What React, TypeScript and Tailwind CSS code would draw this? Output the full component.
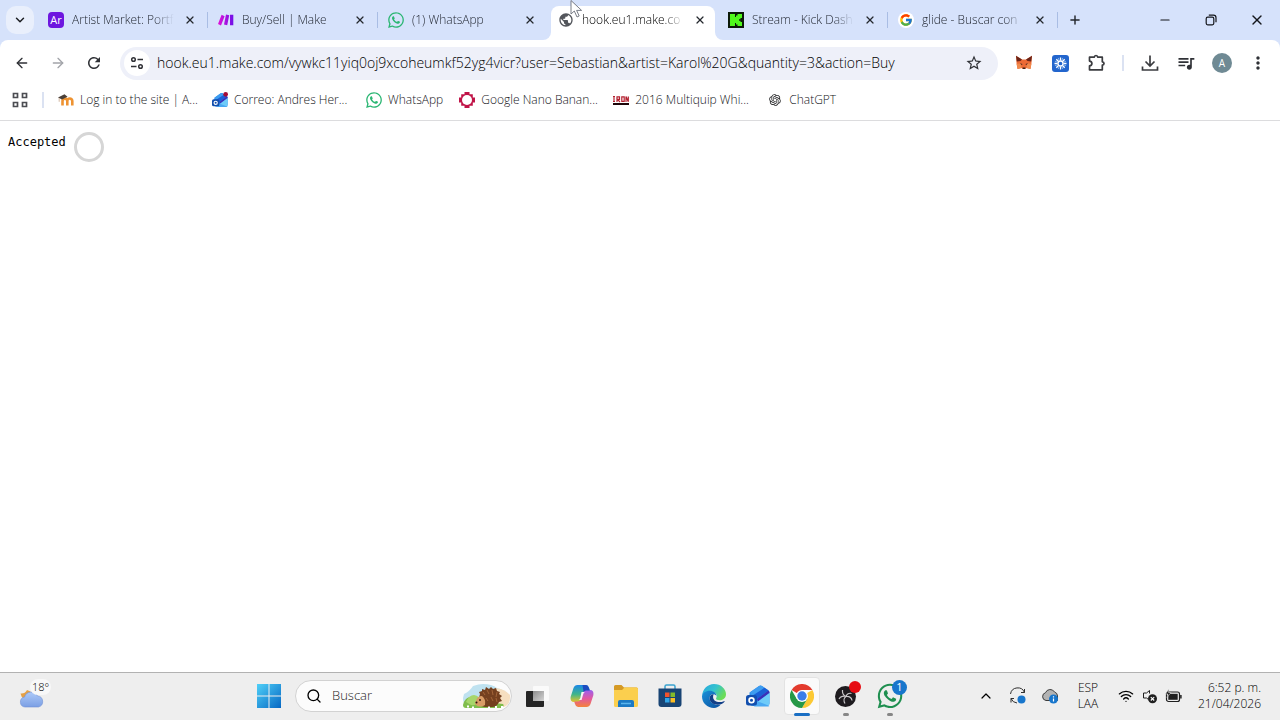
import React from 'react';
import { ArrowLeft, ArrowRight, ChevronDown, ChevronUp, Minus, Plus, Search, Wifi, X } from 'lucide-react';
import { FaWhatsapp } from 'react-icons/fa';
import { FcGoogle } from 'react-icons/fc';
import { MdMoreVert, MdOutlineQueueMusic, MdPublic, MdRefresh, MdStarBorder } from 'react-icons/md';
import { RiOpenaiFill } from 'react-icons/ri';

interface Tab {
  title: string;
  icon: React.ReactNode;
  active?: boolean;
  divider?: boolean;
}

interface Bookmark {
  title: string;
  icon: React.ReactNode;
}

function MakeIcon() {
  return (
    <svg viewBox="0 0 16 16" className="size-4">
      <defs>
        <linearGradient id="make" x1="0" x2="1" y1="0" y2="0">
          <stop offset="0" stopColor="#e312d8" />
          <stop offset="1" stopColor="#6f10e8" />
        </linearGradient>
      </defs>
      <path d="M3.6 2.8 6.6 4.2 3 13.4 0 12z M8 2.6l3.2.7-2 10-3.2-.7z M12 2.8h3.3v10.4H12z" fill="url(#make)" />
    </svg>
  );
}

function KickIcon() {
  return (
    <svg viewBox="0 0 16 16" className="size-4">
      <path d="M0 0h16v16H0z" fill="#0b1a08" />
      <path d="M2 2h5v3h1V3.500h1.500V2H14v4h-1.500v1.200H11v1.600h1.500V10H14v4H9.500v-1.500H8V11H7v3H2z" fill="#4ff91c" />
    </svg>
  );
}

function MoodleIcon() {
  return (
    <svg viewBox="0 0 16 16" className="size-4">
      <path
        d="M4.500 13.500V9a2.300 2.300 0 0 1 4.800 0v4.500M9.300 9a2.400 2.400 0 0 1 5 0v4.500"
        fill="none"
        stroke="#ee9332"
        strokeWidth="2.600"
      />
      <path d="M0 5.600 6.500 2.200 9.500 4.800 4 7.600z" fill="#4a4039" />
      <path d="M1.200 6v3.800" stroke="#c8a78b" strokeWidth=".8" />
    </svg>
  );
}

function OutlookIcon({ className, dot }: { className: string; dot?: boolean }) {
  return (
    <svg viewBox="0 0 24 24" className={className}>
      <path d="M3.500 8.500 13 2q1.500-1 3 0l6 4q1.500 1 1.500 2.500V19q0 3-3 3H7q-3.500 0-3.500-3z" fill="#2f8eea" />
      <path d="M4 8.500 13 2q1.500-1 3 0l2.500 1.800L6 12z" fill="#3d9cf0" />
      <path d="M6 12 18.500 3.800l4 2.700L11 15z" fill="#1a5fd6" />
      <path d="M11 15 22.500 6.500q1 .8 1 2.500L12 17.500z" fill="#3a2fb8" />
      <path d="M12 17.500 23.500 9v10q0 3-3 3H8z" fill="#6ecbf9" />
      <path d="M12 17.500 23.500 22q-1 .5-3 .5H8z" fill="#49a8f2" />
      <rect y="11" width="11" height="10.500" rx="2.500" fill="#124fae" />
      <circle cx="5.500" cy="16.200" r="2.400" fill="none" stroke="#fff" strokeWidth="1.700" />
      {dot && <circle cx="20.500" cy="3.500" r="3.500" fill="#a50a36" />}
    </svg>
  );
}

function NanoIcon() {
  return (
    <svg viewBox="0 0 16 16" className="size-4">
      <path d="M5.500 0h5v2.200h3.300v3.300H16v5h-2.200v3.300h-3.300V16h-5v-2.200H2.200v-3.300H0v-5h2.200V2.200h3.300z" fill="#c01347" />
      <circle cx="8" cy="8" r="5" fill="#fff" />
    </svg>
  );
}

function IronIcon() {
  return (
    <svg viewBox="0 0 16 9" className="h-[9px] w-4">
      <path
        d="M1 .5v5M0 .5h2M0 5.500h2M4 6V.8h2.500v2.500H4.500L7 6M8.800.8h2.400v4.500H8.800zM13 6V.5l2.300 5.200V.5"
        fill="none"
        stroke="#b3202f"
        strokeWidth="1.200"
      />
      <path d="M0 7h16v2H0z" fill="#1d0508" />
    </svg>
  );
}

function FoxIcon() {
  return (
    <svg viewBox="0 0 16 16" className="size-4">
      <path d="M0 .8 6 4.500h4L16 .8l-.6 8L14.500 14l-4-1-1 1h-3l-1-1-4 1L.6 8.800z" fill="#ec6a35" />
      <path d="M0 .8 6 4.500 4.500 6 .8 6.500zM16 .8 10 4.500 11.500 6l3.700.5z" fill="#6b2418" />
      <path d="m.6 8.800 4-.3 1 4.500-4 1zm14.800 0-4-.3-1 4.500 4 1z" fill="#f08a4c" />
      <path d="m3.800 8.300 2.700.8-.6 1zM12.200 8.300l-2.700.8.600 1zM6.500 12.500h3l-.4 1.500H6.900z" fill="#34231f" />
    </svg>
  );
}

function BurstIcon() {
  return (
    <svg viewBox="0 0 17 17" className="size-[17px]">
      <rect width="17" height="17" rx="3" fill="#2265cd" />
      <path
        d="M8.500 2.500v3M8.500 11.500v3M2.500 8.500h3M11.500 8.500h3M4.300 4.300l2 2M10.700 10.700l2 2M12.700 4.300l-2 2M6.300 10.700l-2 2"
        stroke="#fff"
        strokeWidth="1.300"
      />
      <path
        d="M6.200 2.900l1 2.700M10.800 2.900l-1 2.700M6.200 14.100l1-2.700M10.800 14.100l-1-2.700M2.900 6.200l2.700 1M2.900 10.800l2.700-1M14.100 6.200l-2.700 1M14.100 10.800l-2.700-1"
        stroke="#9cc6f2"
        strokeWidth=".8"
      />
      <circle cx="8.500" cy="8.500" r="2.500" fill="none" stroke="#fff" strokeWidth="1.300" />
    </svg>
  );
}

function PuzzleIcon() {
  return (
    <svg viewBox="0 0 18 18" className="size-[18px]" fill="none" stroke="#3b3c40" strokeWidth="1.700">
      <path
        d="M2.500 3.200h4.800c.1-2.300 3.300-2.300 3.400 0h4.600v4.600c2.300.1 2.300 3.300 0 3.400v4.600H2.500v-3.900c3.200-.3 3.200-4.500 0-4.800z"
        strokeLinejoin="round"
      />
    </svg>
  );
}

function DownloadIcon() {
  return (
    <svg viewBox="0 0 18 18" className="size-[18px]" fill="none" stroke="#3b3c40" strokeWidth="1.700">
      <path d="M9 1.500v10M4.500 7.500 9 12l4.500-4.500M1.500 12.500V16h15v-3.500" />
    </svg>
  );
}

function TuneIcon() {
  return (
    <svg viewBox="0 0 14 14" className="size-3.5" fill="none" stroke="#303136" strokeWidth="1.500">
      <circle cx="3.500" cy="3.500" r="1.800" />
      <path d="M7.500 3.500H13M1 10.500h5.500" />
      <circle cx="10.500" cy="10.500" r="1.800" />
    </svg>
  );
}

function AppsIcon() {
  return (
    <svg viewBox="0 0 16 16" className="size-4" fill="none" stroke="#4c4d52" strokeWidth="1.700">
      <path d="M1.500 1.500h4v4h-4zM10.500 1.500h4v4h-4zM1.500 10.500h4v4h-4zM10.500 10.500h4v4h-4z" />
    </svg>
  );
}

function RestoreIcon() {
  return (
    <svg viewBox="0 0 12 12" className="size-3" fill="none" stroke="#15171c" strokeWidth="1.200">
      <rect x="1.200" y="3.200" width="7.600" height="7.600" rx="1.500" />
      <path d="M3.800 1.200h4.700a2.500 2.500 0 0 1 2.500 2.500v4.500" />
    </svg>
  );
}

function PointerIcon() {
  return (
    <svg viewBox="0 0 14 20" className="absolute top-0 left-[22px] h-5 w-3.5">
      <path d="M1 .5v13.500l3.300-3 2.700 6 2.200-1-2.600-5.600h5z" fill="#fff" stroke="#6b6f7a" strokeWidth=".9" />
    </svg>
  );
}

function WeatherIcon() {
  return (
    <svg viewBox="0 0 26 20" className="h-5 w-[26px]">
      <defs>
        <linearGradient id="cloud" x1="0" x2="0" y1="0" y2="1">
          <stop offset="0" stopColor="#aecaf8" />
          <stop offset="1" stopColor="#7b9fe4" />
        </linearGradient>
      </defs>
      <path d="M1.500 5.500Q6 6 8 2q4 1 5 4l-4 5H5Q2 9 1.500 5.500z" fill="#e5a045" />
      <path d="M6 19a5 5 0 0 1-.5-9.900A7 7 0 0 1 18.500 8 5.600 5.600 0 0 1 19.500 19z" fill="url(#cloud)" stroke="#6e8fd4" strokeWidth=".6" />
    </svg>
  );
}

function WindowsIcon() {
  return (
    <svg viewBox="0 0 24 24" className="size-6">
      <defs>
        <linearGradient id="win" x1="0" x2="1" y1="0" y2="1">
          <stop offset="0" stopColor="#4fd0f8" />
          <stop offset="1" stopColor="#0667c3" />
        </linearGradient>
      </defs>
      <path d="M0 0h11.500v11.500H0zM12.500 0H24v11.500H12.500zM0 12.500h11.500V24H0zM12.500 12.500H24V24H12.500z" fill="url(#win)" />
    </svg>
  );
}

function HedgehogArt() {
  return (
    <svg viewBox="0 0 50 28" className="h-7 w-[50px] shrink-0">
      <path d="M3 12Q9 9 12 4q6-2 10-2 9 0 14 4 9 2 12 8-1 8-6 11H6Q0 20 3 12z" fill="#bfe2f0" />
      <path d="M34 6q10 1 15 7 1 9-6 12H33z" fill="#f6dfc0" />
      <path d="M2 23Q4 15 10 15l6 4 26 3q2 2-2 4H5q-3 0-3-3z" fill="#80bd4c" />
      <path d="M5 20q3-7 8-7 6 1 6 6-4 5-9 4z" fill="#a6d66a" />
      <path
        d="M19 12l-1-2 3-1v-2l3 1 1-3 3 2 2-2 2 2 3-1 1 3 3 1-1 2 3 2-2 2 2 3-3 1q-2 5-7 5H24q-7-1-7-6z"
        fill="#75401f"
      />
      <path d="M22 10l2 3m2-5 2 4m3-4 1 5m4-3-1 5m-10 1 2 3m3-4 2 4m3-3 1 4" stroke="#a8693b" strokeWidth=".9" />
      <path d="M15 19q1-5 6-5 4 3 3 9-5 3-9 0-2-2 0-4z" fill="#d99c66" />
      <circle cx="19" cy="18" r=".9" fill="#23150b" />
      <circle cx="15.500" cy="20.500" r="1" fill="#23150b" />
      <path d="M6 24.500h2m3 1h2m14 0h2m5-.5h2m4 0h2" stroke="#fff" strokeWidth="1.800" />
    </svg>
  );
}

function TaskViewIcon() {
  return (
    <svg viewBox="0 0 24 24" className="size-6">
      <defs>
        <linearGradient id="tv" x1="0" x2="1" y1="0" y2="1">
          <stop offset="0" stopColor="#8d8d8d" />
          <stop offset="1" stopColor="#d4d4d4" />
        </linearGradient>
      </defs>
      <rect y="7" width="18" height="16" rx="1" fill="#252525" />
      <rect x="7" y="2" width="16" height="15" rx="1" fill="#fbfbfb" opacity=".9" />
      <path d="M7 7h11v10H7z" fill="url(#tv)" />
    </svg>
  );
}

function CopilotIcon() {
  return (
    <svg viewBox="0 0 24 24" className="size-6">
      <defs>
        <linearGradient id="cpA" x1="0" x2="0" y1="0" y2="1">
          <stop offset="0" stopColor="#1a87e8" />
          <stop offset=".55" stopColor="#3fb58a" />
          <stop offset="1" stopColor="#e4c52b" />
        </linearGradient>
        <linearGradient id="cpB" x1="0" x2="0" y1="0" y2="1">
          <stop offset="0" stopColor="#9a5ff0" />
          <stop offset=".5" stopColor="#e2589f" />
          <stop offset="1" stopColor="#f4823b" />
        </linearGradient>
      </defs>
      <path d="M7.500 1H16q2.200 0 3 3l.8 2.500H16q-2 0-2.700 2.500L11 15.500Q10.200 18 8 18H4Q0 18 .6 13L3.500 4Q4.600 1 7.500 1z" fill="url(#cpA)" />
      <path d="M16.500 23H8q-2.200 0-3-3l-.8-2.500H8q2 0 2.700-2.500L13 8.500Q13.800 6 16 6h4q4 0 3.400 5L20.500 20q-1.100 3-4 3z" fill="url(#cpB)" />
      <path d="M12.500 1H16q2.200 0 3 3l.8 2.500H16q-1.600 0-2.400 1.600z" fill="#1c4cc0" />
      <path d="M11.500 8h3.500q-1.300.5-1.800 2.200L11.600 16h-3q1.300-.5 1.700-2z" fill="#f4f4f4" />
    </svg>
  );
}

function FolderIcon() {
  return (
    <svg viewBox="0 0 24 24" className="size-6">
      <path d="M0 2.500Q0 1 1.500 1h6L10 3.500h12.500Q24 3.500 24 5v6H0z" fill="#d59a25" />
      <path d="M0 6h8l2.500-2.500h12Q24 3.500 24 5v16.500q0 1.500-1.500 1.500h-21Q0 23 0 21.500z" fill="#fbcf4e" />
      <path d="M4 23v-5q0-2 2-2h12q2 0 2 2v5z" fill="#1b79c4" />
      <path d="M7 19.500h10" stroke="#5ab5ee" strokeWidth="1.500" />
    </svg>
  );
}

function StoreIcon() {
  return (
    <svg viewBox="0 0 24 24" className="size-6">
      <path d="M7 5V2.500Q7 1 8.500 1h7Q17 1 17 2.500V5" fill="none" stroke="#3aa3cf" strokeWidth="1.500" />
      <path d="M.5 4.500h23V20q0 3-3 3h-17q-3 0-3-3z" fill="#184474" />
      <path d="M7 8.500h4.500V13H7z" fill="#f0532c" />
      <path d="M12.500 8.500H17V13h-4.500z" fill="#82ba2a" />
      <path d="M7 14h4.500v4.500H7z" fill="#30a5e8" />
      <path d="M12.500 14H17v4.500h-4.500z" fill="#fbbc22" />
    </svg>
  );
}

function EdgeIcon() {
  return (
    <svg viewBox="0 0 24 24" className="size-6">
      <defs>
        <linearGradient id="edA" x1="0" x2="1" y1="0" y2=".5">
          <stop offset="0" stopColor="#27a5df" />
          <stop offset=".55" stopColor="#35c3ce" />
          <stop offset="1" stopColor="#6bdc57" />
        </linearGradient>
        <linearGradient id="edB" x1="0" x2="1" y1="0" y2="1">
          <stop offset="0" stopColor="#1991d9" />
          <stop offset="1" stopColor="#0c4f9f" />
        </linearGradient>
      </defs>
      <path d="M.1 11.500C.7 5 5.600 0 12 0c7 0 12 5 12 10.300 0 3.600-2.700 6-6.200 6-2.600 0-4.200-1-3.700-2 1.400-1.700.8-5.900-4.100-6.500C5.500 7.300 1.200 9 .1 11.500z" fill="url(#edA)" />
      <path d="M0 12.500C.2 9 3.800 6.800 7.600 6.800c4 0 6.900 2.400 6.900 5.300-.7-1.300-2-1.900-3.400-1.900-2.600 0-3.600 2.200-3.500 4.200.2 4.300 5.700 7.300 11.200 6.200C17 22.800 14.500 24 12 24 5.200 24 0 18.800 0 12.500z" fill="url(#edB)" />
      <path d="M7.600 14.400c.2 4.500 6 7.800 12 5.500 1.300-.5 2.200-1.300 2.900-2.200.3-.5-.1-.8-.6-.5-4.600 2-11.300.8-10.800-4.900 0-.9.3-1.500.8-2-3-.2-4.300 1.900-4.300 4.100z" fill="#123f88" />
    </svg>
  );
}

function ChromeIcon() {
  return (
    <svg viewBox="0 0 24 24" className="size-6">
      <path d="M12 12 1.600 6A12 12 0 0 1 22.400 6H12z" fill="#e33b2e" />
      <path d="M12 12 22.400 6A12 12 0 0 1 12 24l5.200-9z" fill="#fcc934" />
      <path d="M12 12 17.200 15 12 24A12 12 0 0 1 1.600 6l5.200 9z" fill="#279847" />
      <circle cx="12" cy="12" r="6" fill="#fff" />
      <circle cx="12" cy="12" r="4.700" fill="#3b7de9" />
    </svg>
  );
}

function ObsIcon() {
  return (
    <svg viewBox="0 0 24 24" className="size-6">
      <circle cx="11.500" cy="12.500" r="10.500" fill="#1e1b1f" />
      <path
        d="M8.500 6c-.5 4 1 5.500 3.500 6.500 3.500-.3 5.500 1 6 4M12 12.500c-2.300 1.500-2.500 4.500-1 7M12 12.500c.7-2.500 3-3.800 5.500-3M12 12.500c-2-.8-5.500-.2-7 2.500"
        fill="none"
        stroke="#c9c7ca"
        strokeWidth="1.200"
      />
    </svg>
  );
}

function SyncIcon() {
  return (
    <svg viewBox="0 0 18 18" className="size-[18px]">
      <path d="M1.500 7A7.300 7.300 0 0 1 15.500 5.500M15.500 2v3.500H12M2 11.500A7.300 7.300 0 0 0 8 16M2 15.500v-4h3" fill="none" stroke="#2f2f2f" />
      <circle cx="12.500" cy="12.500" r="4" fill="#1876cc" />
    </svg>
  );
}

function CloudInfoIcon() {
  return (
    <svg viewBox="0 0 18 18" className="size-[18px]">
      <path d="M5 13.500a4 4 0 0 1-.5-7.800A5 5 0 0 1 13.500 5a4.300 4.300 0 0 1 3 4v4.500z" fill="#b3b3b3" stroke="#3c3c3c" />
      <circle cx="12.500" cy="12" r="4.500" fill="#1876cc" />
      <path d="M12.500 11.500v3M12.500 9.300v1.200" stroke="#fff" strokeWidth="1.200" />
    </svg>
  );
}

function MutedIcon() {
  return (
    <svg viewBox="0 0 16 16" className="size-4">
      <path d="M7.500 2.500v3M7.500 2.500 4.500 5H1.500v5h3l2 1.500" fill="none" stroke="#1f1f1f" strokeLinejoin="round" />
      <circle cx="10.500" cy="10.800" r="4.500" fill="#1f1f1f" />
      <path d="m8.800 9.100 3.400 3.400m0-3.400-3.400 3.400" stroke="#fff" strokeWidth="1.100" />
    </svg>
  );
}

function BatteryIcon() {
  return (
    <svg viewBox="0 0 17 14" className="h-3.5 w-[17px]">
      <rect x="1.500" y="3" width="13" height="9.500" rx="2" fill="none" stroke="#1f1f1f" strokeWidth="1.200" />
      <rect x="3.300" y="4.800" width="9.400" height="6" fill="#1f1f1f" />
      <path d="M15.900 6v3.500" stroke="#1f1f1f" strokeWidth="1.500" />
      <path d="M4 0 .5 5H3L2 8.500 6 3.500H3.500z" fill="#1f1f1f" stroke="#eee" strokeWidth=".5" />
    </svg>
  );
}

const tabs: Tab[] = [
  {
    title: 'Artist Market: Portf',
    icon: <span className="flex size-4 items-center justify-center rounded-sm bg-[#6d16df] text-[11px] font-normal text-white">Ar</span>,
    divider: true,
  },
  { title: 'Buy/Sell | Make', icon: <MakeIcon />, divider: true },
  { title: '(1) WhatsApp', icon: <FaWhatsapp className="size-[18px] text-[#2bb673]" /> },
  { title: 'hook.eu1.make.co', icon: <MdPublic className="size-4 text-[#53565c]" />, active: true },
  { title: 'Stream - Kick Dash', icon: <KickIcon />, divider: true },
  {
    title: 'glide - Buscar con',
    icon: (
      <span className="flex size-4 items-center justify-center rounded-full bg-white">
        <FcGoogle className="size-3.5" />
      </span>
    ),
    divider: true,
  },
];

const bookmarks: Bookmark[] = [
  { title: 'Log in to the site | A...', icon: <MoodleIcon /> },
  { title: 'Correo: Andres Her...', icon: <OutlookIcon className="size-4" dot /> },
  { title: 'WhatsApp', icon: <FaWhatsapp className="size-[18px] text-[#2bb673]" /> },
  { title: 'Google Nano Banan...', icon: <NanoIcon /> },
  { title: '2016 Multiquip Whi...', icon: <IronIcon /> },
  { title: 'ChatGPT', icon: <RiOpenaiFill className="size-3.5 text-[#202123]" /> },
];

function BrowserTab({ title, icon, active, divider }: Tab) {
  return (
    <div className="relative flex w-[170px] shrink items-center pr-1.5 pl-2.5">
      {active && (
        <>
          <div className="absolute inset-x-[3px] top-1.5 bottom-0 rounded-t-lg bg-white" />
          <div className="absolute bottom-0 -left-[5px] size-2 bg-white">
            <div className="size-2 rounded-br-lg bg-[#d6e2fb]" />
          </div>
          <div className="absolute -right-[5px] bottom-0 size-2 bg-white">
            <div className="size-2 rounded-bl-lg bg-[#d6e2fb]" />
          </div>
        </>
      )}
      <button
        className={`relative flex min-w-0 flex-1 items-center gap-2 text-left text-xs ${active ? 'text-black' : 'text-[#1d222c]'}`}
      >
        <span className="flex w-4 shrink-0 justify-center">
          <span className="shrink-0">{icon}</span>
        </span>
        <span className="min-w-0 flex-1 overflow-hidden mask-r-from-80% whitespace-nowrap">{title}</span>
      </button>
      <button aria-label={`Close ${title}`} className="relative ml-1 flex size-6 items-center justify-center text-[#25282e]">
        <X className="size-3" strokeWidth={2.5} />
      </button>
      {divider && <span className="absolute right-0 h-4 w-px bg-[#a9bde4]" />}
      {active && <PointerIcon />}
    </div>
  );
}

function TabStrip() {
  return (
    <header className="flex h-10 items-stretch bg-[#d6e2fb] pl-1.5">
      <button aria-label="Search tabs" className="mr-1 flex size-7 items-center justify-center self-center rounded-[10px] bg-[#e9effc]">
        <ChevronDown className="size-3.5 text-[#1c1e22]" strokeWidth={2.5} />
      </button>
      {tabs.map((tab) => (
        <BrowserTab key={tab.title} {...tab} />
      ))}
      <button aria-label="New tab" className="flex w-[34px] items-center justify-center text-[#25282e]">
        <Plus className="size-3.5" strokeWidth={2.500} />
      </button>
      <div className="ml-auto flex text-[#15171c]">
        <button aria-label="Minimize" className="flex w-[46px] items-center justify-center">
          <Minus className="size-3.5" strokeWidth={2} />
        </button>
        <button aria-label="Restore" className="flex w-[46px] items-center justify-center">
          <RestoreIcon />
        </button>
        <button aria-label="Close" className="flex w-[46px] items-center justify-center">
          <X className="size-4" strokeWidth={2} />
        </button>
      </div>
    </header>
  );
}

function ToolButton({ label, children }: { label: string; children: React.ReactNode }) {
  return (
    <button aria-label={label} className="flex h-9 w-9 shrink-0 items-center justify-center text-[#2f3136]">
      {children}
    </button>
  );
}

function Toolbar() {
  return (
    <div className="bg-[#d6e2fb]">
      <div className="flex h-[46px] items-center rounded-t-lg bg-white px-1">
        <ToolButton label="Back">
          <ArrowLeft className="size-4" />
        </ToolButton>
        <ToolButton label="Forward">
          <ArrowRight className="size-4 text-[#a2a4a9]" />
        </ToolButton>
        <ToolButton label="Reload">
          <MdRefresh className="size-[18px]" />
        </ToolButton>
        <div className="mx-2 flex h-[33px] min-w-0 flex-1 items-center rounded-full bg-[#eef0f9]">
          <button aria-label="Site information" className="ml-1 flex size-[26px] shrink-0 items-center justify-center rounded-full bg-white">
            <TuneIcon />
          </button>
          <input
            aria-label="Address"
            className="ml-[7px] min-w-0 flex-1 bg-transparent text-sm text-black outline-none"
            defaultValue="hook.eu1.make.com/vywkc11yiq0oj9xcoheumkf52yg4vicr?user=Sebastian&artist=Karol%20G&quantity=3&action=Buy"
          />
          <button aria-label="Bookmark this page" className="mr-1 flex w-10 items-center justify-center text-[#2f3136]">
            <MdStarBorder className="size-[18px]" />
          </button>
        </div>
        <ToolButton label="MetaMask">
          <FoxIcon />
        </ToolButton>
        <ToolButton label="Loom">
          <BurstIcon />
        </ToolButton>
        <ToolButton label="Extensions">
          <PuzzleIcon />
        </ToolButton>
        <div className="mx-2 h-4 w-0.5 bg-[#dbe2f2]" />
        <ToolButton label="Downloads">
          <DownloadIcon />
        </ToolButton>
        <ToolButton label="Media controls">
          <MdOutlineQueueMusic className="size-5" />
        </ToolButton>
        <ToolButton label="Profile">
          <span className="flex size-5 items-center justify-center rounded-full bg-[#6f8a94] text-[10px] font-normal text-white">A</span>
        </ToolButton>
        <ToolButton label="Menu">
          <MdMoreVert className="size-5" />
        </ToolButton>
      </div>
    </div>
  );
}

function BookmarksBar() {
  return (
    <nav className="border-b border-[#dcdcde] pb-1.5">
      <div className="flex h-7 items-center">
        <button aria-label="Apps" className="flex w-10 justify-center">
          <AppsIcon />
        </button>
        <div className="mr-3.5 ml-0.5 h-4 w-0.5 bg-[#dbe2f2]" />
        <div className="flex gap-4">
          {bookmarks.map(({ title, icon }) => (
            <a
              key={title}
              href="#"
              className={`flex items-center gap-1.5 text-xs whitespace-nowrap text-[#15161a] ${title.endsWith('...') ? 'w-[138px]' : ''}`}
            >
              <span className="flex w-4 shrink-0 justify-center">
                <span className="shrink-0">{icon}</span>
              </span>
              {title}
            </a>
          ))}
        </div>
      </div>
    </nav>
  );
}

function TaskButton({ label, children, state }: { label: string; children: React.ReactNode; state?: 'active' | 'open' }) {
  return (
    <button aria-label={label} className="relative flex h-[46px] w-11 shrink-0 items-center justify-center">
      {state === 'active' && <span className="absolute inset-x-1 inset-y-1 rounded-sm border border-[#e3e3e3] bg-[#fafafa]" />}
      <span className="relative">{children}</span>
      {state === 'active' && <span className="absolute bottom-[3px] h-[3px] w-4 rounded-full bg-[#1a6fc4]" />}
      {state === 'open' && <span className="absolute bottom-[3px] h-[3px] w-1.5 rounded-full bg-[#868686]" />}
    </button>
  );
}

function Taskbar() {
  return (
    <footer className="flex h-12 items-center border-t border-[#b2b2b2] bg-[#eeeeee] pb-px text-black">
      <button aria-label="Weather" className="relative flex h-full w-[247px] shrink items-center pt-1 pl-[19px]">
        <WeatherIcon />
        <span className="absolute top-1.5 left-[30px] rounded-full bg-[#f8f8f8] px-0.5 text-[11px] leading-4">18°</span>
      </button>
      <TaskButton label="Start">
        <WindowsIcon />
      </TaskButton>
      <label className="mx-1 flex h-8 w-[217px] items-center rounded-full border border-[#d2d2d2] bg-[#fcfcfc] pl-2.5">
        <Search className="size-4 shrink-0" strokeWidth={2} />
        <input
          aria-label="Buscar"
          placeholder="Buscar"
          className="ml-2.5 w-0 min-w-0 flex-1 bg-transparent text-[13px] outline-none placeholder:text-[#1f1f1f]"
        />
        <HedgehogArt />
      </label>
      <TaskButton label="Task view">
        <TaskViewIcon />
      </TaskButton>
      <TaskButton label="Copilot">
        <CopilotIcon />
      </TaskButton>
      <TaskButton label="File Explorer">
        <FolderIcon />
      </TaskButton>
      <TaskButton label="Microsoft Store">
        <StoreIcon />
      </TaskButton>
      <TaskButton label="Edge">
        <EdgeIcon />
      </TaskButton>
      <TaskButton label="Outlook">
        <OutlookIcon className="size-6" />
      </TaskButton>
      <TaskButton label="Chrome" state="active">
        <ChromeIcon />
      </TaskButton>
      <TaskButton label="OBS Studio" state="open">
        <ObsIcon />
        <span className="absolute -top-[3px] -right-[3px] size-3 rounded-full bg-[#e60b12]" />
      </TaskButton>
      <TaskButton label="WhatsApp" state="open">
        <FaWhatsapp className="size-7 text-[#1f8f50]" />
        <span className="absolute -top-0.5 -right-[3px] flex size-[15px] items-center justify-center rounded-full bg-[#1876cc] text-[11px] font-normal text-white">
          1
        </span>
      </TaskButton>
      <div className="ml-auto flex items-center pr-[19px] text-xs leading-4">
        <button aria-label="Show hidden icons" className="flex w-8 justify-center">
          <ChevronUp className="size-4" strokeWidth={1.800} />
        </button>
        <button aria-label="Sync" className="flex w-8 justify-center">
          <SyncIcon />
        </button>
        <button aria-label="OneDrive" className="flex w-8 justify-center">
          <CloudInfoIcon />
        </button>
        <button className="w-11 text-center">
          ESP
          <br />
          LAA
        </button>
        <button aria-label="Network, sound and battery" className="ml-2 flex w-16 shrink-0 items-center justify-between">
          <Wifi className="size-4" strokeWidth={2} />
          <MutedIcon />
          <BatteryIcon />
        </button>
        <button className="ml-4 text-right whitespace-nowrap">
          6:52 p. m.
          <br />
          21/04/2026
        </button>
      </div>
    </footer>
  );
}

export default function App() {
  return (
    <div className="flex min-h-screen flex-col bg-white font-['Open_Sans','Noto_Sans',sans-serif] font-light">
      <TabStrip />
      <Toolbar />
      <BookmarksBar />
      <main className="flex flex-1 items-start gap-2 px-2 pt-[11px]">
        <pre className="font-['DejaVu_Sans_Mono',monospace] text-xs leading-5 font-normal text-black">Accepted</pre>
        <span role="status" aria-label="Loading" className="size-[30px] rounded-full border-3 border-[#d6d6d6]" />
      </main>
      <Taskbar />
    </div>
  );
}
